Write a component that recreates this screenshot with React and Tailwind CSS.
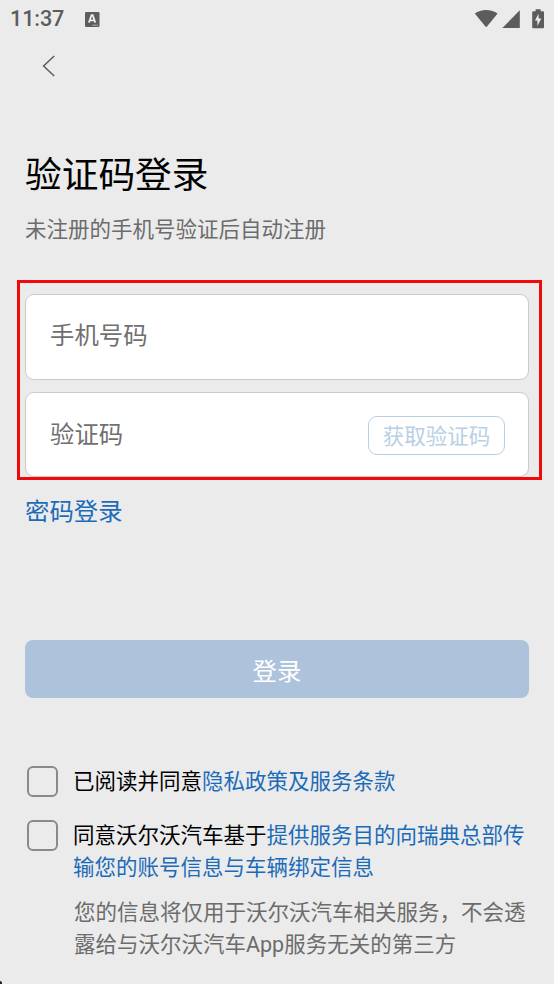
/**
 * StatusBar Component
 *
 * Clock and notification icon on the left, wifi, signal and battery on the right.
 */
function StatusBar() {
  return (
    <div className="flex h-[38px] items-center justify-between pl-[10px] pr-[10px] text-[#5c5c5c]">
      <div className="flex items-center">
        <span className="w-[75px] text-[21.6px] leading-[38px] font-medium tracking-[-0.1px]">
          11:37
        </span>
        <svg width="15" height="15" viewBox="0 0 15 15">
          <rect width="14.5" height="15" rx="1.2" fill="currentColor" />
          <path
            d="M3.9 10.6 L6.5 3.2 H7.7 L10.3 10.6 M5.2 8.4 H9"
            fill="none"
            stroke="#ebebeb"
            strokeWidth="1.8"
          />
          <path d="M7.5 13.2 H13" stroke="#ebebeb" strokeWidth="0.8" strokeDasharray="1.4 0.6" />
        </svg>
      </div>
      <div className="flex items-center">
        <svg width="24" height="20" viewBox="0 0 24 20" fill="currentColor">
          <path d="M0.8 4.4 C6.8 -0.3 17.5 -0.3 23.6 4.4 L13 17.6 Q12.2 18.5 11.4 17.6 Z" />
        </svg>
        <svg className="ml-[4px]" width="18" height="19" viewBox="0 0 18 19" fill="currentColor">
          <path d="M17.8 0.2 V18 H0.4 Z" />
        </svg>
        <svg className="ml-[12px]" width="12" height="20" viewBox="0 0 12 20">
          <path
            d="M3.6 0.3 H8.6 V2.2 H11 Q12 2.2 12 3.2 V18.3 Q12 19.3 11 19.3 H1.2 Q0.2 19.3 0.2 18.3 V3.2 Q0.2 2.2 1.2 2.2 H3.6 Z"
            fill="currentColor"
          />
          <path d="M6.6 4.8 L2.9 11.6 H5.4 V17 L9.3 9.6 H6.6 Z" fill="#ebebeb" />
        </svg>
      </div>
    </div>
  );
}

/**
 * Agreement Component
 *
 * A checkbox followed by agreement text, with the linked part in blue.
 *
 * @param {string} id - Unique identifier for the checkbox
 * @param {string} text - Plain leading text
 * @param {string} link - Linked text shown after it
 */
function Agreement({ id, text, link }) {
  return (
    <div className="flex items-start">
      <input
        id={id}
        type="checkbox"
        className="h-[31px] w-[31px] shrink-0 appearance-none rounded-[6px] border-2 border-[#8a8a8a] checked:bg-[#1c6bb9]"
      />
      <label htmlFor={id} className="ml-[15px] text-[21.5px] leading-[32px] text-black">
        {text}
        <span className="text-[#1c6bb9]">{link}</span>
      </label>
    </div>
  );
}

export default function App() {
  return (
    <div className="relative h-[984px] w-[554px] overflow-hidden bg-[#ebebeb] font-['Roboto','Noto_Sans_CJK_SC',sans-serif]">
      <StatusBar />

      <button className="ml-[42px] mt-[17px] block" aria-label="返回">
        <svg width="14" height="22" viewBox="0 0 14 22" fill="none">
          <path d="M12.2 1 L1.6 11 L12.2 21" stroke="#5c5c5c" strokeWidth="1.5" />
        </svg>
      </button>

      <div className="ml-[25px] mt-[75px]">
        <h1 className="text-[36.7px] leading-[48px] text-black">验证码登录</h1>
        <p className="mt-[14px] text-[21.5px] leading-[32px] text-[#6c6c6c]">
          未注册的手机号验证后自动注册
        </p>
      </div>

      <div className="ml-[17px] mt-[34px] h-[200px] w-[525px] border-[3px] border-[#f00a0a] px-[5px] pt-[11px]">
        <input
          className="block h-[86px] w-[504px] rounded-[9px] border border-[#cbcbcb] bg-white px-[24px] pb-[3px] text-[24.4px] placeholder:text-[#707070]"
          placeholder="手机号码"
        />
        {/* Code field with the send button on the right */}
        <div className="mt-[12px] flex h-[85px] w-[504px] items-center rounded-[9px] border border-[#cbcbcb] bg-white pl-[24px] pr-[23px]">
          <input
            className="min-w-0 flex-1 pt-[2px] text-[24.4px] placeholder:text-[#707070]"
            placeholder="验证码"
          />
          <button className="mt-px h-[39px] w-[137px] rounded-[9px] border-[1.5px] border-[#b9cfe6] pt-[4px] text-[21.5px] leading-[32px] text-[#b9cfe6]">
            获取验证码
          </button>
        </div>
      </div>

      <a className="ml-[25px] mt-[16px] block text-[24.4px] leading-[32px] text-[#1c6bb9]">
        密码登录
      </a>

      <button className="ml-[25px] mt-[112px] block h-[58px] w-[504px] rounded-[8px] bg-[#adc3dc] pt-[6px] text-[24.4px] text-white">
        登录
      </button>

      <div className="ml-[27px] mt-[68px] flex w-[510px] flex-col gap-[22px]">
        <Agreement id="privacy" text="已阅读并同意" link="隐私政策及服务条款" />
        <Agreement
          id="transfer"
          text="同意沃尔沃汽车基于"
          link="提供服务目的向瑞典总部传输您的账号信息与车辆绑定信息"
        />
      </div>

      <p className="ml-[74px] mt-[13px] w-[456px] text-[21.5px] leading-[32px] text-[#6c6c6c]">
        您的信息将仅用于沃尔沃汽车相关服务，不会透露给与沃尔沃汽车App服务无关的第三方
      </p>

      <div className="absolute bottom-0 left-0 h-[3px] w-[2px] rounded-tr-[2px] bg-[#10243a]" />
    </div>
  );
}
